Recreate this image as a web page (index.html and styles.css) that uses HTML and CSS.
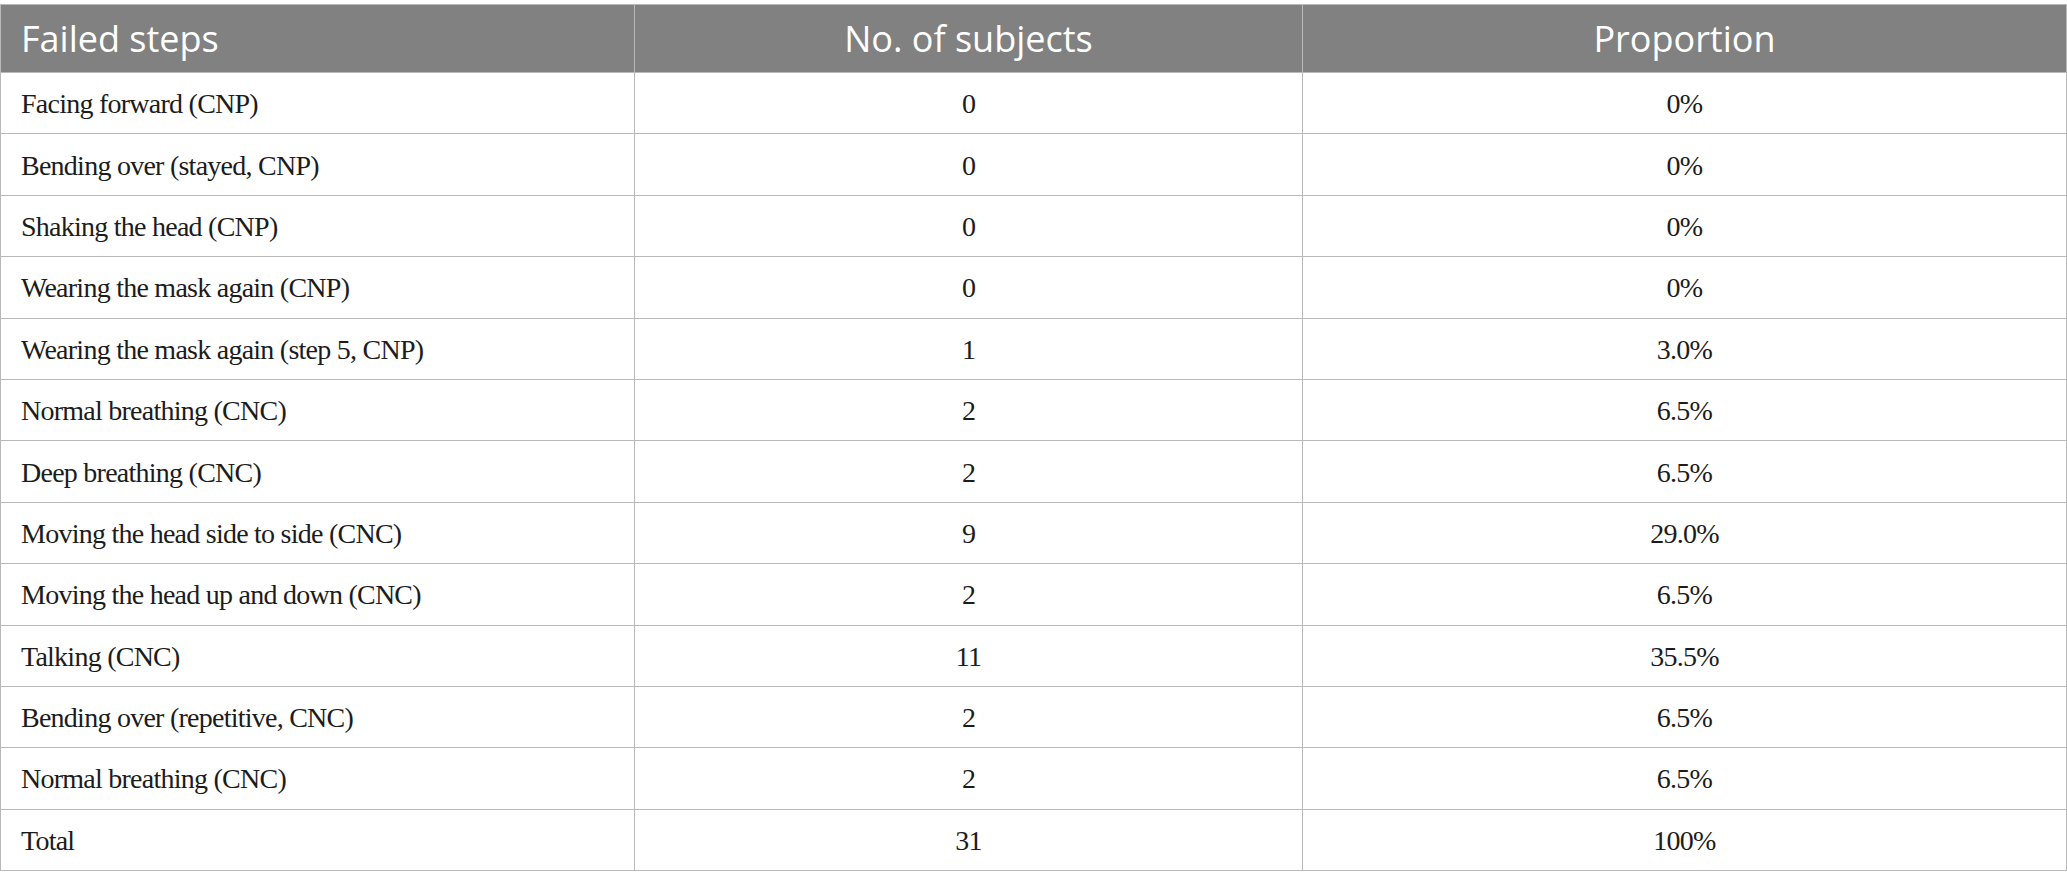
FILE: index.html
```html
<!DOCTYPE html>
<html>
<head>
<meta charset="utf-8">
<link rel="stylesheet" href="styles.css">
</head>
<body>
<div class="wrap">
<table class="data">
<colgroup><col class="c1"><col class="c2"><col class="c3"></colgroup>
<thead>
<tr><th class="left">Failed steps</th><th>No. of subjects</th><th>Proportion</th></tr>
</thead>
<tbody>
<tr><td class="left">Facing forward (CNP)</td><td>0</td><td>0%</td></tr>
<tr><td class="left">Bending over (stayed, CNP)</td><td>0</td><td>0%</td></tr>
<tr><td class="left">Shaking the head (CNP)</td><td>0</td><td>0%</td></tr>
<tr><td class="left">Wearing the mask again (CNP)</td><td>0</td><td>0%</td></tr>
<tr><td class="left">Wearing the mask again (step 5, CNP)</td><td>1</td><td>3.0%</td></tr>
<tr><td class="left">Normal breathing (CNC)</td><td>2</td><td>6.5%</td></tr>
<tr><td class="left">Deep breathing (CNC)</td><td>2</td><td>6.5%</td></tr>
<tr><td class="left">Moving the head side to side (CNC)</td><td>9</td><td>29.0%</td></tr>
<tr><td class="left">Moving the head up and down (CNC)</td><td>2</td><td>6.5%</td></tr>
<tr><td class="left">Talking (CNC)</td><td>11</td><td>35.5%</td></tr>
<tr><td class="left">Bending over (repetitive, CNC)</td><td>2</td><td>6.5%</td></tr>
<tr><td class="left">Normal breathing (CNC)</td><td>2</td><td>6.5%</td></tr>
<tr><td class="left">Total</td><td>31</td><td>100%</td></tr>
</tbody>
</table>
</div>
</body>
</html>
```
FILE: styles.css
```css
html, body { margin: 0; padding: 0; background: #ffffff; }
.wrap { padding: 4px 0 0 0; width: 2066px; }
.data {
  border-collapse: collapse;
  width: 2066px;
  table-layout: fixed;
}
.c1 { width: 634px; }
.c2 { width: 668px; }
.c3 { width: 764px; }
.data th {
  background: #808180;
  color: #ffffff;
  font-family: "Open Sans", "Noto Sans", sans-serif;
  font-weight: 400;
  font-size: 36px;
  line-height: 40px;
  height: 68px;
  padding: 0 20px;
  text-align: center;
  border: 1px solid #b9b9b9;
  box-sizing: border-box;
}
.data td {
  font-family: "Liberation Serif", serif;
  font-size: 28px;
  letter-spacing: -0.75px;
  line-height: 32px;
  color: #1c1c1c;
  height: 61.4px;
  padding: 2px 20px 0 20px;
  text-align: center;
  border: 1px solid #b9b9b9;
  box-sizing: border-box;
}
.data .left { text-align: left; }
```
